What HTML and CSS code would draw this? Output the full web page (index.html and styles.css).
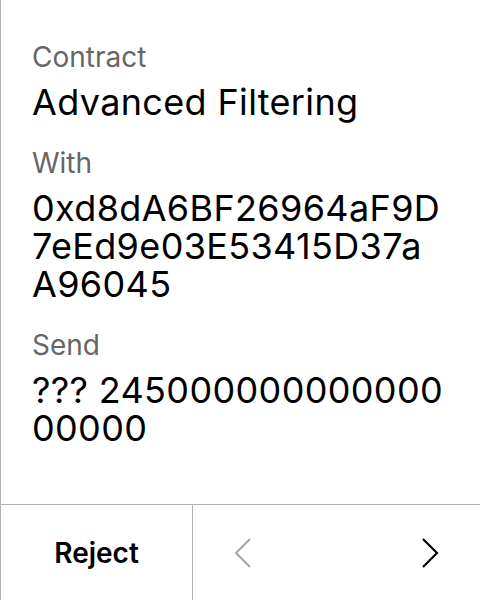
FILE: index.html
```html
<!DOCTYPE html>
<html>
<head>
<meta charset="utf-8">
<link rel="stylesheet" href="styles.css">
</head>
<body>
<div class="screen">
  <div class="content">
    <div class="field">
      <div class="label">Contract</div>
      <div class="value">Advanced Filtering</div>
    </div>
    <div class="field">
      <div class="label">With</div>
      <div class="value">0xd8dA6BF26964aF9D<br>7eEd9e03E53415D37a<br>A96045</div>
    </div>
    <div class="field">
      <div class="label">Send</div>
      <div class="value">??? 245000000000000<br>00000</div>
    </div>
  </div>
  <div class="footer">
    <div class="reject">Reject</div>
    <div class="nav">
      <svg class="chev" width="20" height="32" viewBox="0 0 20 32"><path d="M17 2 L3 16 L17 30" fill="none" stroke="#a6a6a6" stroke-width="2"/></svg>
      <svg class="chev" width="20" height="32" viewBox="0 0 20 32"><path d="M3 2 L17 16 L3 30" fill="none" stroke="#000" stroke-width="2.2"/></svg>
    </div>
  </div>
</div>
</body>
</html>
```
FILE: styles.css
```css
html, body {
  margin: 0;
  padding: 0;
  background: #fff;
}
body {
  font-family: Inter, "Noto Sans", sans-serif;
  color: #000;
}
.screen {
  width: 479px;
  height: 600px;
  border-left: 1px solid #b3b3b3;
  display: flex;
  flex-direction: column;
}
.content {
  flex: 1;
  padding: 41px 8px 0 31px;
  display: flex;
  flex-direction: column;
  gap: 26px;
}
.field {
  display: flex;
  flex-direction: column;
  gap: 10px;
}
.label {
  font-size: 28px;
  line-height: 32px;
  color: #666;
}
.value {
  font-size: 36px;
  line-height: 38px;
  letter-spacing: 0.35px;
  color: #000;
}
.footer {
  height: 95px;
  border-top: 1px solid #b3b3b3;
  display: flex;
}
.reject {
  width: 191px;
  border-right: 1px solid #b3b3b3;
  display: flex;
  align-items: center;
  justify-content: center;
  font-size: 28px;
  font-weight: 600;
}
.nav {
  flex: 1;
  display: flex;
  align-items: center;
  justify-content: space-between;
  padding: 0 40px 0 40px;
}
.chev {
  display: block;
}
```
